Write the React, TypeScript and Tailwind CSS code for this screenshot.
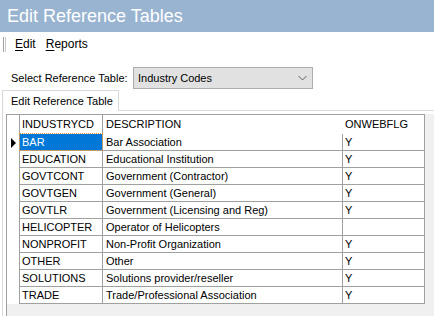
import React from "react";

const rows = [
  { code: "BAR", desc: "Bar Association", flag: "Y" },
  { code: "EDUCATION", desc: "Educational Institution", flag: "Y" },
  { code: "GOVTCONT", desc: "Government (Contractor)", flag: "Y" },
  { code: "GOVTGEN", desc: "Government (General)", flag: "Y" },
  { code: "GOVTLR", desc: "Government (Licensing and Reg)", flag: "Y" },
  { code: "HELICOPTER", desc: "Operator of Helicopters", flag: "" },
  { code: "NONPROFIT", desc: "Non-Profit Organization", flag: "Y" },
  { code: "OTHER", desc: "Other", flag: "Y" },
  { code: "SOLUTIONS", desc: "Solutions provider/reseller", flag: "Y" },
  { code: "TRADE", desc: "Trade/Professional Association", flag: "Y" },
];

const App = () => {
  return (
    <div className="w-[434px] h-[316px] overflow-hidden bg-white text-black font-['Liberation_Sans',Arial,sans-serif] flex flex-col">
      {/* title */}
      <div className="h-[32px] shrink-0 bg-[#99b4d1] text-white text-[18px] pl-[7px] flex items-center">
        Edit Reference Tables
      </div>

      {/* menu strip */}
      <div className="h-[24px] shrink-0 flex items-center text-[12px]">
        <div className="ml-[3px] flex gap-[1px] h-[15px]">
          <div className="w-[1px] bg-[#a0a0a0]" />
          <div className="w-[1px] bg-[#c8c8c8]" />
        </div>
        <div className="ml-[9px] flex gap-[10px]">
          <span>
            <span className="underline underline-offset-2">E</span>dit
          </span>
          <span>
            <span className="underline underline-offset-2">R</span>eports
          </span>
        </div>
      </div>

      {/* select row */}
      <div className="mt-[11px] h-[22px] shrink-0 flex items-center text-[11px]">
        <div className="w-[133px] pl-[11px]">Select Reference Table:</div>
        <div className="w-[180px] h-[22px] border border-[#adadad] bg-[#e1e1e1] flex items-center justify-between pl-[4px] pr-[5px]">
          <span>Industry Codes</span>
          <svg width="9" height="6" viewBox="0 0 9 6">
            <polyline points="0.5,1 4.5,5 8.5,1" fill="none" stroke="#606060" strokeWidth="1" />
          </svg>
        </div>
      </div>

      {/* tabs */}
      <div className="mt-[1px] flex-1 flex flex-col pl-[2px] min-h-0">
        <div className="flex">
          <div className="relative z-10 -mb-[1px] w-[117px] h-[21px] border border-b-0 border-[#d9d9d9] bg-white text-[11px] pl-[8px] flex items-center">
            Edit Reference Table
          </div>
        </div>
        <div className="flex-1 border-t border-l border-[#d9d9d9] pl-[3px] pt-[3px] flex min-h-0">
          {/* data grid */}
          <div className="flex-1 border-l border-[#a0a0a0] bg-[#f0f0f0] text-[11px]">
            <div className="w-[418px] bg-white border-t border-[#a0a0a0]">
              {/* header */}
              <div className="flex h-[19px]">
                <div className="w-[13px] border-r border-[#a0a0a0]" />
                <div className="w-[83px] border-r border-[#a0a0a0] pl-[2px] flex items-center">INDUSTRYCD</div>
                <div className="w-[240px] border-r border-white pl-[3px] flex items-center">DESCRIPTION</div>
                <div className="w-[82px] border-r border-[#a0a0a0] pl-[2px] flex items-center">ONWEBFLG</div>
              </div>
              {rows.map((r, i) => (
                <div key={r.code} className="flex h-[17px]">
                  <div className="w-[13px] border-r border-[#a0a0a0] pl-[4px] flex items-center">
                    {i === 0 && (
                      <svg width="5" height="10" viewBox="0 0 5 10">
                        <polygon points="0,0 5,5 0,10" fill="#000" />
                      </svg>
                    )}
                  </div>
                  <div
                    className={
                      i === 0
                        ? "w-[83px] border-r border-b border-[#a0a0a0] flex items-center"
                        : "w-[83px] border-r border-b border-[#a0a0a0] pl-[2px] flex items-center"
                    }
                  >
                    {i === 0 ? (
                      <div className="w-full h-full bg-[#0078d7] text-white pl-[2px] flex items-center outline-1 outline-dotted outline-[#e09040]">
                        {r.code}
                      </div>
                    ) : (
                      r.code
                    )}
                  </div>
                  <div className="w-[240px] border-r border-b border-[#a0a0a0] pl-[3px] flex items-center whitespace-nowrap">
                    {r.desc}
                  </div>
                  <div className="w-[82px] border-r border-b border-[#a0a0a0] pl-[2px] flex items-center">
                    {r.flag}
                  </div>
                </div>
              ))}
            </div>
          </div>
        </div>
      </div>
    </div>
  );
};

export default App;
